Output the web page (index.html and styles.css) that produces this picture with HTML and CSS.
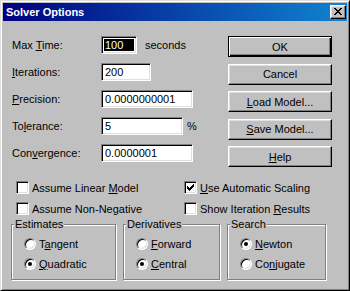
FILE: index.html
```html
<!DOCTYPE html>
<html lang="en">
  <head>
    <meta charset="UTF-8" />
    <meta name="viewport" content="width=device-width, initial-scale=1.0" />
    <title>Solver Options</title>
    <link rel="stylesheet" href="styles.css">
  </head>
  <body>
    <div class="window">
      <div class="titlebar">
        <span class="title">Solver Options</span>
        <span class="close">
          <svg width="8" height="7" viewBox="0 0 8 7" shape-rendering="crispEdges"><path d="M0 0h2v1H0zM6 0h2v1H6zM1 1h2v1H1zM5 1h2v1H5zM2 2h4v1H2zM3 3h2v1H3zM2 4h4v1H2zM1 5h2v1H1zM5 5h2v1H5zM0 6h2v1H0zM6 6h2v1H6z" fill="#000"/></svg>
        </span>
      </div>

      <div class="content">
        <div class="top">
          <div class="fields">
            <div class="row">
              <span class="label">Max <u>T</u>ime:</span>
              <div class="field field-time"><span class="sel">100</span></div>
              <span class="unit">seconds</span>
            </div>
            <div class="row">
              <span class="label"><u>I</u>terations:</span>
              <div class="field field-iter">200</div>
            </div>
            <div class="row">
              <span class="label"><u>P</u>recision:</span>
              <div class="field field-wide">0.0000000001</div>
            </div>
            <div class="row">
              <span class="label">To<u>l</u>erance:</span>
              <div class="field field-tol">5</div>
              <span class="unit unit-pct">%</span>
            </div>
            <div class="row">
              <span class="label">Con<u>v</u>ergence:</span>
              <div class="field field-wide">0.0000001</div>
            </div>
          </div>

          <div class="buttons">
            <button class="btn btn-default">OK</button>
            <button class="btn">Cancel</button>
            <button class="btn"><u>L</u>oad Model...</button>
            <button class="btn"><u>S</u>ave Model...</button>
            <button class="btn"><u>H</u>elp</button>
          </div>
        </div>

        <div class="checks">
          <div class="check"><span class="box"></span><span>Assume Linear <u>M</u>odel</span></div>
          <div class="check">
            <span class="box"><svg width="7" height="7" viewBox="0 0 7 7" shape-rendering="crispEdges"><path d="M6 0h1v1H6zM5 1h2v1H5zM0 2h1v1H0zM4 2h3v1H4zM0 3h2v1H0zM3 3h3v1H3zM0 4h5v1H0zM1 5h3v1H1zM2 6h1v1H2z" fill="#000"/></svg></span>
            <span><u>U</u>se Automatic Scaling</span>
          </div>
          <div class="check"><span class="box"></span><span>Assume Non-Negative</span></div>
          <div class="check"><span class="box"></span><span>Show Iteration <u>R</u>esults</span></div>
        </div>

        <div class="groups">
          <fieldset class="group group-est">
            <legend>Estimates</legend>
            <div class="radio"><span class="dot"></span><span>T<u>a</u>ngent</span></div>
            <div class="radio"><span class="dot on"></span><span><u>Q</u>uadratic</span></div>
          </fieldset>
          <fieldset class="group group-der">
            <legend>Derivatives</legend>
            <div class="radio"><span class="dot"></span><span><u>F</u>orward</span></div>
            <div class="radio"><span class="dot on"></span><span><u>C</u>entral</span></div>
          </fieldset>
          <fieldset class="group group-search">
            <legend>Search</legend>
            <div class="radio"><span class="dot on"></span><span><u>N</u>ewton</span></div>
            <div class="radio"><span class="dot"></span><span>Co<u>n</u>jugate</span></div>
          </fieldset>
        </div>
      </div>
    </div>
  </body>
</html>
```

FILE: styles.css
```css
* {
  box-sizing: border-box;
}
body {
  margin: 0;
  background: #c0c0c0;
  font-family: "Liberation Sans", Arial, sans-serif;
  font-size: 11px;
  color: #000;
}
u {
  text-decoration: underline;
  text-underline-offset: 1px;
}

/* window frame */
.window {
  width: 350px;
  height: 291px;
  background: #c0c0c0;
  border: 1px solid;
  border-color: #dfdfdf #000 #000 #dfdfdf;
  box-shadow: inset 1px 1px #fff, inset -1px -1px #808080;
  padding: 2px;
}
.titlebar {
  height: 18px;
  display: flex;
  align-items: center;
  justify-content: space-between;
  padding: 0 1px 0 3px;
  background: linear-gradient(to right, #000080, #1084d0);
  color: #fff;
  font-weight: bold;
}
.close {
  width: 16px;
  height: 14px;
  display: flex;
  align-items: center;
  justify-content: center;
  padding: 0 1px 1px 0;
  background: #c0c0c0;
  border: 1px solid;
  border-color: #fff #000 #000 #fff;
  box-shadow: inset -1px -1px #808080, inset 1px 1px #dfdfdf;
}

.content {
  padding: 15px 15px 0 9px;
}

/* edit fields + buttons */
.top {
  display: flex;
  justify-content: space-between;
}
.fields {
  display: flex;
  flex-direction: column;
  gap: 9px;
}
.row {
  height: 18px;
  display: flex;
  align-items: center;
}
.label {
  width: 89px;
}
.field {
  height: 18px;
  display: flex;
  align-items: center;
  padding: 0 3px;
  background: #fff;
  border: 1px solid;
  border-color: #808080 #fff #fff #808080;
  box-shadow: inset 1px 1px #000, inset -1px -1px #dfdfdf;
}
.field-time {
  width: 36px;
  padding: 2px;
  align-items: stretch;
}
.field-iter {
  width: 50px;
}
.field-tol {
  width: 82px;
}
.field-wide {
  width: 92px;
}
.sel {
  flex: 1;
  display: flex;
  align-items: center;
  padding-left: 1px;
  background: #000;
  color: #fff;
}
.unit {
  margin-left: 8px;
}
.unit-pct {
  margin-left: 4px;
}

.buttons {
  width: 104px;
  display: flex;
  flex-direction: column;
  gap: 6.5px;
}
.btn {
  height: 21px;
  padding: 0;
  font: inherit;
  color: #000;
  background: #c0c0c0;
  border: 1px solid;
  border-color: #fff #000 #000 #fff;
  box-shadow: inset -1px -1px #808080, inset 1px 1px #dfdfdf;
}
.btn-default {
  border-color: #000;
  box-shadow: inset 1px 1px #fff, inset -1px -1px #000, inset -2px -2px #808080;
}

/* check boxes */
.checks {
  display: grid;
  grid-template-columns: 168px 1fr;
  row-gap: 8px;
  margin-top: 14px;
  padding-left: 4px;
}
.check {
  height: 13px;
  display: flex;
  align-items: center;
  gap: 3px;
}
.box {
  width: 13px;
  height: 13px;
  display: flex;
  align-items: center;
  justify-content: center;
  background: #fff;
  border: 1px solid;
  border-color: #808080 #fff #fff #808080;
  box-shadow: inset 1px 1px #000, inset -1px -1px #dfdfdf;
}

/* option groups */
.groups {
  display: flex;
  gap: 7px;
  margin: 3px 0 0 -1px;
}
.group {
  height: 62px;
  margin: 0;
  padding: 6px 0 0 12px;
  border: 1px solid #808080;
  box-shadow: inset 1px 1px #fff, 1px 1px #fff;
}
.group-est {
  width: 105px;
}
.group-der {
  width: 97px;
}
.group-search {
  width: 99px;
}
.group legend {
  margin-left: -10px;
  padding: 0 1px;
  line-height: 13px;
  background: #c0c0c0;
}
.radio {
  height: 14px;
  display: flex;
  align-items: center;
  gap: 3px;
  margin-bottom: 6px;
}
.dot {
  width: 12px;
  height: 12px;
  display: flex;
  align-items: center;
  justify-content: center;
  border-radius: 50%;
  background: #fff;
  border: 1px solid;
  border-color: #808080 #fff #fff #808080;
  box-shadow: inset 1px 1px #000, inset -1px -1px #dfdfdf;
}
.dot.on::after {
  content: "";
  width: 4px;
  height: 4px;
  border-radius: 50%;
  background: #000;
}
```
